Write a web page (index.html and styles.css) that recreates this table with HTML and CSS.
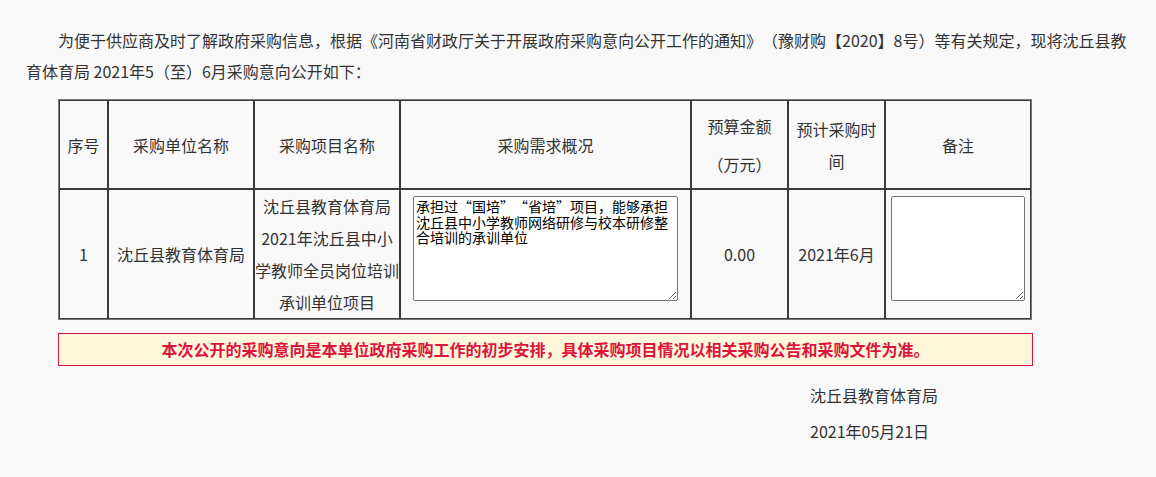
FILE: index.html
```html
<!DOCTYPE html>
<html lang="zh-CN">
<head>
  <meta charset="UTF-8" />
  <title>沈丘县教育体育局 2021年5（至）6月采购意向公开</title>
  <link rel="stylesheet" href="styles.css">
</head>
<body>
<div class="page">
  <p class="intro">为便于供应商及时了解政府采购信息，根据《河南省财政厅关于开展政府采购意向公开工作的通知》（豫财购【2020】8号）等有关规定，现将沈丘县教育体育局 2021年5（至）6月采购意向公开如下：</p>

  <table class="intent-table">
    <thead>
      <tr>
        <th class="col-no">序号</th>
        <th class="col-unit">采购单位名称</th>
        <th class="col-project">采购项目名称</th>
        <th class="col-need">采购需求概况</th>
        <th class="col-budget"><span class="budget-line">预算金额</span><span class="budget-line">（万元）</span></th>
        <th class="col-time">预计采购时间</th>
        <th class="col-remark">备注</th>
      </tr>
    </thead>
    <tbody>
      <tr>
        <td>1</td>
        <td>沈丘县教育体育局</td>
        <td>沈丘县教育体育局2021年沈丘县中小学教师全员岗位培训承训单位项目</td>
        <td class="cell-area"><textarea class="need-text" readonly>承担过“国培”“省培”项目，能够承担沈丘县中小学教师网络研修与校本研修整合培训的承训单位</textarea></td>
        <td>0.00</td>
        <td>2021年6月</td>
        <td class="cell-area"><textarea class="remark-text" readonly></textarea></td>
      </tr>
    </tbody>
  </table>

  <div class="notice">本次公开的采购意向是本单位政府采购工作的初步安排，具体采购项目情况以相关采购公告和采购文件为准。</div>

  <div class="sign">
    <div>沈丘县教育体育局</div>
    <div>2021年05月21日</div>
  </div>
</div>
</body>
</html>
```

FILE: styles.css
```css
body {
  margin: 0;
  padding: 25px 0 0 26px;
  background: #f9f9f9;
  color: #333;
  font-family: "Noto Sans CJK SC", "Noto Sans", sans-serif;
  text-spacing-trim: space-all;
}
.page {
  width: 1115px;
}
.intro {
  margin: 0;
  font-size: 16px;
  line-height: 31px;
  text-indent: 2em;
}
.intent-table {
  width: 974px;
  margin: 12px 0 0 32px;
  table-layout: fixed;
  border-collapse: separate;
  border-spacing: 0;
  border: 1px solid #777;
  font-size: 16px;
  line-height: 32px;
}
.intent-table th,
.intent-table td {
  border: 1px solid #3a3a3a;
  padding: 0;
  text-align: center;
  vertical-align: middle;
  font-weight: normal;
}
.intent-table th {
  height: 87px;
  line-height: 32px;
}
.col-no { width: 47px; }
.col-unit { width: 144px; }
.col-project { width: 144px; }
.col-need { width: 289px; }
.col-budget { width: 95px; }
.col-time { width: 95px; }
.col-remark { width: 144px; }
.budget-line {
  display: block;
  line-height: 38px;
}
.intent-table td.cell-area {
  vertical-align: top;
}
.intent-table textarea {
  display: block;
  box-sizing: border-box;
  margin: 6px auto 0;
  height: 105px;
  padding: 2px;
  border: 1px solid #767676;
  border-radius: 2px;
  background: #fff;
  color: #000;
  font-family: "Noto Sans CJK SC", sans-serif;
  font-feature-settings: "fwid";
  font-size: 14px;
  line-height: 15.5px;
}
.need-text {
  width: 265px;
}
.remark-text {
  width: 134px;
}
.notice {
  width: 973px;
  margin: 13px 0 0 32px;
  border: 1px solid #dc143c;
  background: #fff8dc;
  color: #dc143c;
  font-size: 16px;
  font-weight: bold;
  line-height: 31px;
  text-align: center;
}
.sign {
  margin: 11px 0 0 784px;
  font-size: 16px;
  line-height: 36px;
}
```
